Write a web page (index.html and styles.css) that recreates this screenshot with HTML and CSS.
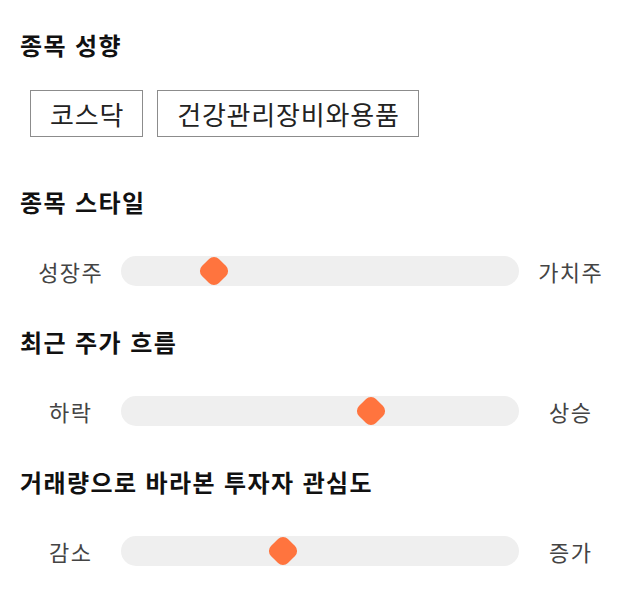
FILE: index.html
```html
<!DOCTYPE html>
<html lang="ko">
<head>
<meta charset="utf-8">
<link rel="stylesheet" href="styles.css">
</head>
<body>
<main class="page">
  <section class="section section-tags">
    <h2 class="title">종목 성향</h2>
    <div class="tags">
      <span class="tag">코스닥</span>
      <span class="tag">건강관리장비와용품</span>
    </div>
  </section>
  <section class="section">
    <h2 class="title">종목 스타일</h2>
    <div class="scale">
      <span class="scale-label">성장주</span>
      <div class="track"><span class="thumb" style="left: 23.4%"></span></div>
      <span class="scale-label">가치주</span>
    </div>
  </section>
  <section class="section">
    <h2 class="title">최근 주가 흐름</h2>
    <div class="scale">
      <span class="scale-label">하락</span>
      <div class="track"><span class="thumb" style="left: 62.8%"></span></div>
      <span class="scale-label">상승</span>
    </div>
  </section>
  <section class="section">
    <h2 class="title">거래량으로 바라본 투자자 관심도</h2>
    <div class="scale">
      <span class="scale-label">감소</span>
      <div class="track"><span class="thumb" style="left: 40.7%"></span></div>
      <span class="scale-label">증가</span>
    </div>
  </section>
</main>
</body>
</html>
```

FILE: styles.css
```css
* { box-sizing: border-box; }
html, body { margin: 0; padding: 0; background: #fff; }
body {
  font-family: "Noto Sans CJK KR", "Noto Sans", sans-serif;
  color: #111;
}
.page {
  width: 640px;
  padding: 28px 20px 0;
  display: flex;
  flex-direction: column;
  gap: 39px;
}
.section { display: flex; flex-direction: column; }
.section-tags { margin-bottom: 9px; }
.title {
  margin: 0;
  font-size: 24px;
  line-height: 34px;
  font-weight: 700;
  letter-spacing: 1.4px;
  color: #111;
}
.tags {
  margin-top: 28px;
  padding-left: 10px;
  display: flex;
  gap: 14px;
}
.tag {
  display: inline-flex;
  align-items: center;
  height: 47px;
  padding: 0 18px 0 19px;
  border: 1px solid #8c8c8c;
  font-size: 26px;
  letter-spacing: 0.8px;
  color: #222;
}
.section .scale { margin-top: 37px; }
.scale {
  display: grid;
  grid-template-columns: 100px 1fr 100px;
  align-items: center;
  height: 30px;
}
.scale-label {
  text-align: center;
  font-size: 22px;
  line-height: 30px;
  letter-spacing: 1.3px;
  text-indent: 1.3px;
  color: #444;
}
.track {
  position: relative;
  height: 30px;
  margin: 0 1px;
  background: #efefef;
  border-radius: 15px;
}
.thumb {
  position: absolute;
  top: 50%;
  width: 24px;
  height: 24px;
  margin: -12px 0 0 -12px;
  background: #ff743e;
  border-radius: 7px;
  transform: rotate(45deg);
}
```
